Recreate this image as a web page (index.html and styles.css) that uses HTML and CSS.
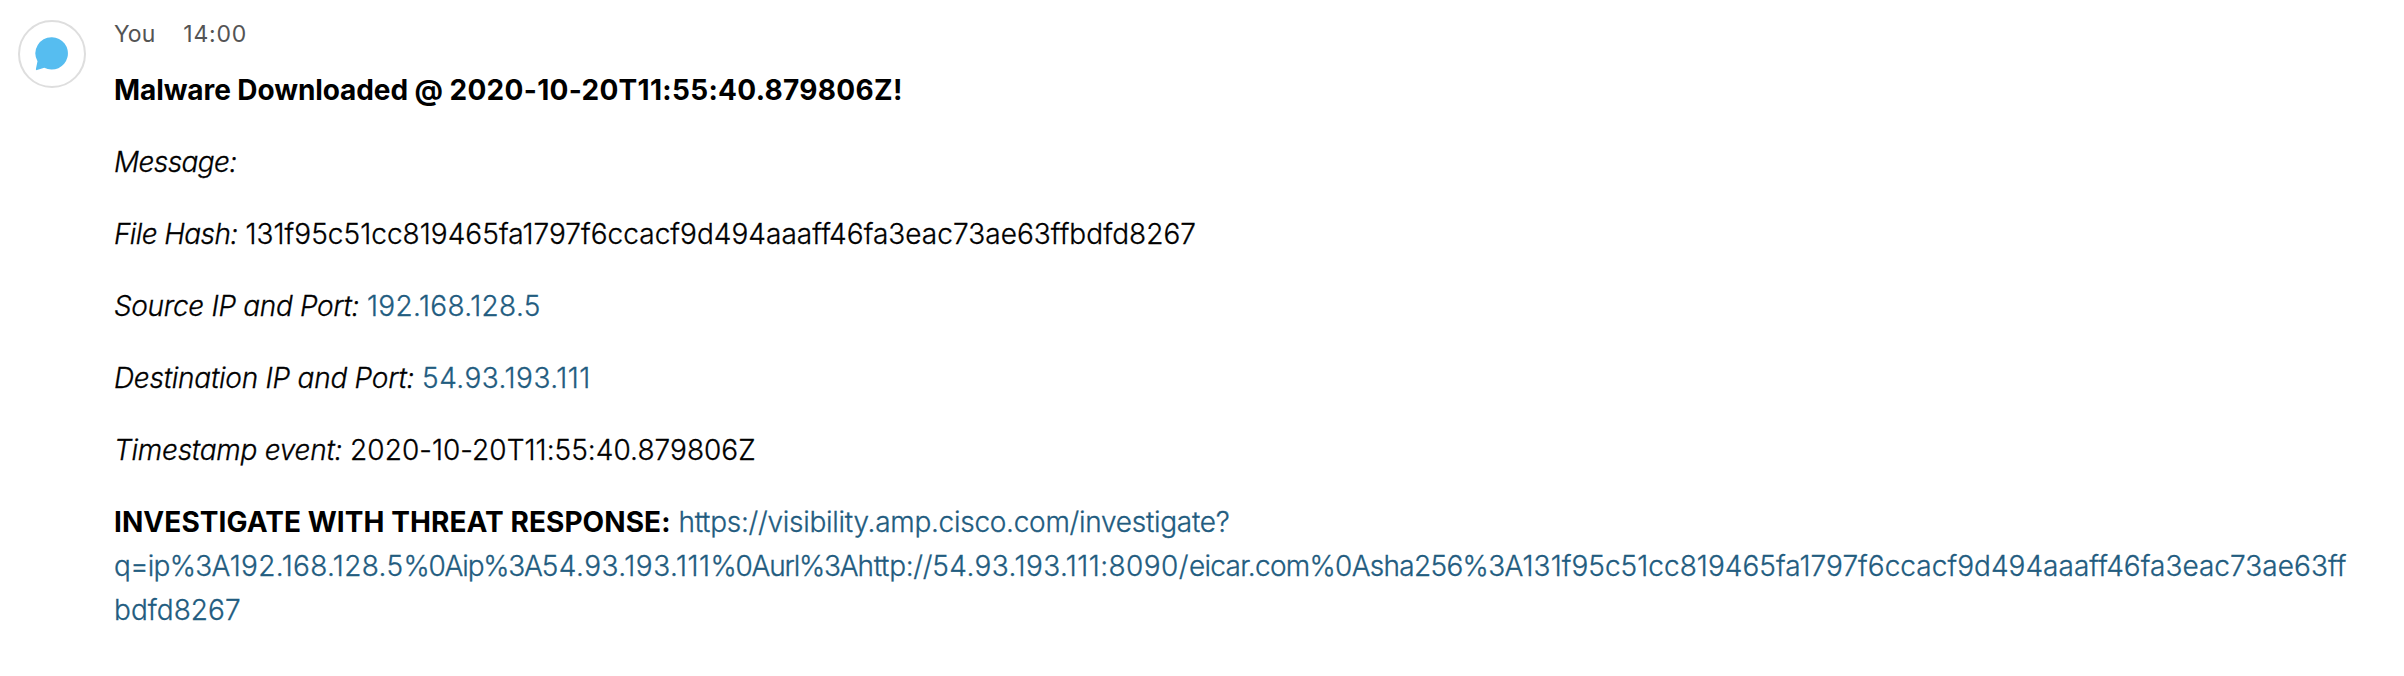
FILE: index.html
```html
<!DOCTYPE html>
<html lang="en"><head><meta charset="utf-8"><title>Message</title><link rel="stylesheet" href="styles.css"></head>
<body><article class="message">
<div class="avatar"><svg class="bubble" viewBox="0 0 34 34"><path d="M17 0.2A16.2 16.2 0 1 1 9.3 30.8L2 33.1Q.7 33.4.9 32L2.5 24.3A16.2 16.2 0 0 1 17 .2Z"/></svg></div>
<div class="content"><header class="meta"><span>You</span><time>14:00</time></header>
<p class="line"><b class="title">Malware Downloaded @ </b><b class="stamp">2020-10-20T11:55:40.879806Z!</b></p>
<p class="line"><i class="label short">Message:</i></p>
<p class="line"><i class="label short">File Hash:</i> <span class="hash">131f95c51cc819465fa1797f6ccacf9d494aaaff46fa3eac73ae63ffbdfd8267</span></p>
<p class="line"><i class="label source">Source IP and Port:</i> <a class="ip">192.168.128.5</a></p>
<p class="line"><i class="label">Destination IP and Port:</i> <a class="ip wide">54.93.193.111</a></p>
<p class="line"><i class="label">Timestamp event:</i> <span class="hash">2020-10-20T11:55:40.879806Z</span></p>
<p class="line"><b>INVESTIGATE WITH THREAT RESPONSE:</b> <a class="url">https://visibility.amp.cisco.com/investigate?<br><span class="query">q=ip%3A</span><span class="ip">192.168.128.5</span><span class="code">%0Aip%3A</span><span class="ip wide">54.93.193.111</span><span class="code">%0Aurl%3A</span>http://<span class="host">54.93.193.111:8090/</span><span class="query">eicar.com%0Asha256%3A</span><span class="hash">131f95c51cc819465fa1797f6ccacf9d494aaaff46fa3eac73ae63ff<br>bdfd8267</span></a></p>
</div></article></body></html>
```
FILE: styles.css
```css
body{margin:0;background:#fff;font-family:Inter,sans-serif;color:#000}
.message{display:flex;gap:28px;padding:20px 18px}
.avatar{box-sizing:border-box;width:68px;height:68px;border:2px solid #dedede;border-radius:50%;display:flex;align-items:center;justify-content:center;flex:none}
.bubble{width:34px;height:34px;fill:#56bdf0}
.content{white-space:nowrap;font-variant-ligatures:no-contextual}
.meta{display:flex;gap:28px;font-size:23px;line-height:28px;color:#545454}
.meta time{letter-spacing:.8px}
.line{margin:0 0 28px;font-size:28px;line-height:44px;font-weight:300;-webkit-text-stroke:.3px currentColor}
.meta + .line{margin-top:20px}
.line b{font-weight:700;letter-spacing:.07px;-webkit-text-stroke:0}
.line .title{letter-spacing:-.08px}
.line .stamp{letter-spacing:.3px}
.line a{color:#225c7f}
.label{letter-spacing:-.26px}
.label.short{letter-spacing:-.62px}
.label.source{letter-spacing:-.34px}
.hash{letter-spacing:.04px}
.ip{letter-spacing:.35px}
.ip.wide{letter-spacing:.48px}
.url{letter-spacing:-.28px}
.query{letter-spacing:-.7px}
.code{letter-spacing:-1.2px}
.host{letter-spacing:.42px}
.url .hash{letter-spacing:.04px}
```
